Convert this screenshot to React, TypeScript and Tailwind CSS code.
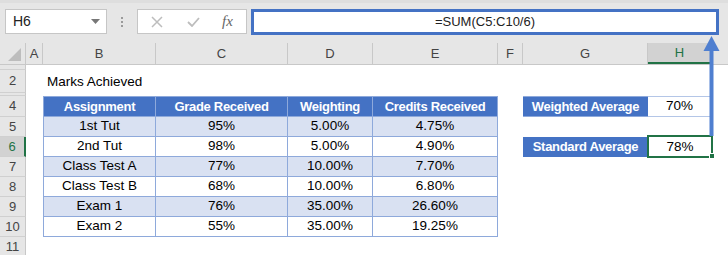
import React from 'react';

type DataRow = { n: number; name: string; grade: string; weight: string; credits: string };

const data: DataRow[] = [
  { n: 5, name: '1st Tut', grade: '95%', weight: '5.00%', credits: '4.75%' },
  { n: 6, name: '2nd Tut', grade: '98%', weight: '5.00%', credits: '4.90%' },
  { n: 7, name: 'Class Test A', grade: '77%', weight: '10.00%', credits: '7.70%' },
  { n: 8, name: 'Class Test B', grade: '68%', weight: '10.00%', credits: '6.80%' },
  { n: 9, name: 'Exam 1', grade: '76%', weight: '35.00%', credits: '26.60%' },
  { n: 10, name: 'Exam 2', grade: '55%', weight: '35.00%', credits: '19.25%' },
];

// row number cell on the left edge
const RowHead = ({ label, active, className = '' }: { label: string; active?: boolean; className?: string }) => (
  <div
    className={`w-[26px] shrink-0 flex items-center justify-center border-b border-[#d0d0d0] text-[13px] ${
      active ? 'bg-[#d2d2d2] text-[#217346] border-r-2 border-r-[#217346]' : 'bg-[#e6e6e6] text-[#444] border-r border-r-[#c8c8c8]'
    } ${className}`}
  >
    {label}
  </div>
);

const ColHead = ({ label, className = '', active }: { label: string; className?: string; active?: boolean }) => (
  <div
    className={`shrink-0 flex items-center justify-center pt-[1px] text-[13px] border-r border-[#c8c8c8] ${
      active ? 'bg-[#d2d2d2] text-[#217346] border-b-2 border-b-[#217346]' : 'text-[#444]'
    } ${className}`}
  >
    {label}
  </div>
);

const Toolbar = () => (
  <div className="h-[43px] bg-[#e6e6e6] border-t-[3px] border-[#dedede] flex items-start pt-[6px]">
    <div className="ml-[5px] w-[102px] h-[25px] bg-white border border-[#c6c6c6] flex items-center justify-between pl-[7px] pr-[6px] text-[14px] text-[#222]">
      <span>H6</span>
      <svg width="9" height="5" viewBox="0 0 9 5">
        <path d="M0 0 L9 0 L4.5 5 Z" fill="#777" />
      </svg>
    </div>
    <div className="w-[30px] h-[25px] flex flex-col items-center justify-center gap-[2px]">
      <span className="w-[2px] h-[2px] bg-[#9a9a9a]" />
      <span className="w-[2px] h-[2px] bg-[#9a9a9a]" />
      <span className="w-[2px] h-[2px] bg-[#9a9a9a]" />
    </div>
    <div className="w-[110px] h-[25px] bg-white border border-[#c6c6c6] flex items-center">
      <svg className="ml-[13px]" width="12" height="12" viewBox="0 0 12 12">
        <path d="M1 1 L11 11 M11 1 L1 11" stroke="#bdbdbd" strokeWidth="1.5" />
      </svg>
      <svg className="ml-[24px]" width="13" height="10" viewBox="0 0 13 10">
        <path d="M1 5 L5 9 L12 1" stroke="#bdbdbd" strokeWidth="1.8" fill="none" />
      </svg>
      <span className="ml-[22px] font-['Liberation_Serif',serif] italic text-[15px] text-[#666] leading-none">fx</span>
    </div>
    <div className="ml-[4px] w-[468px] h-[26px] bg-white border-[3px] border-[#4472C4] flex items-center justify-center text-[13px] text-[#222]">
      =SUM(C5:C10/6)
    </div>
  </div>
);

const HeaderRow = () => (
  <div className="flex h-[22px] bg-[#e6e6e6] border-b border-[#c8c8c8]">
    <div className="w-[26px] shrink-0 border-r border-[#c8c8c8] flex items-end justify-end pr-[4px] pb-[3px]">
      <svg width="13" height="13" viewBox="0 0 13 13">
        <path d="M13 0 L13 13 L0 13 Z" fill="#bdbdbd" />
      </svg>
    </div>
    <ColHead label="A" className="w-[17px]" />
    <ColHead label="B" className="w-[113px]" />
    <ColHead label="C" className="w-[132px]" />
    <ColHead label="D" className="w-[85px]" />
    <ColHead label="E" className="w-[125px]" />
    <ColHead label="F" className="w-[25px]" />
    <ColHead label="G" className="w-[125px]" />
    <ColHead label="H" className="w-[64px]" active />
    <div className="flex-1" />
  </div>
);

const tcell = 'shrink-0 flex items-center justify-center border-r border-b border-[#8EA9DB]';
const bold = 'font-bold text-[13px] tracking-[-0.3px] text-white';

export default function App() {
  return (
    <div className="relative w-[728px] h-[255px] overflow-hidden bg-white font-['Liberation_Sans',Arial,sans-serif] text-[13.5px] text-black">
      <Toolbar />
      <HeaderRow />

      {/* row 1, hidden */}
      <div className="flex h-[5px]">
        <RowHead label="" />
      </div>
      {/* row 2 */}
      <div className="flex h-[23px]">
        <RowHead label="2" />
        <div className="w-[17px] shrink-0" />
        <div className="pl-[4px] pt-[2px] flex items-center">Marks Achieved</div>
      </div>
      {/* row 3, hidden */}
      <div className="flex h-[3px]">
        <RowHead label="" />
      </div>

      {/* row 4: table header */}
      <div className="flex h-[21px]">
        <RowHead label="4" />
        <div className="w-[17px] shrink-0" />
        <div className={`${tcell} w-[113px] border-l border-t bg-[#4472C4] ${bold}`}>Assignment</div>
        <div className={`${tcell} w-[132px] border-t bg-[#4472C4] ${bold}`}>Grade Received</div>
        <div className={`${tcell} w-[85px] border-t bg-[#4472C4] ${bold}`}>Weighting</div>
        <div className={`${tcell} w-[125px] border-t bg-[#4472C4] ${bold}`}>Credits Received</div>
        <div className="w-[25px] shrink-0" />
        <div className={`w-[125px] shrink-0 flex items-center justify-center bg-[#4472C4] border-y border-[#8EA9DB] ${bold}`}>
          Weighted Average
        </div>
        <div className="w-[64px] shrink-0 flex items-center justify-center border-y border-r border-[#b4c6e7]">70%</div>
      </div>

      {data.map((r, i) => (
        <div key={r.n} className="flex h-[20px]">
          <RowHead label={String(r.n)} active={r.n === 6} />
          <div className="w-[17px] shrink-0" />
          <div className={`${tcell} w-[113px] border-l ${i % 2 === 0 ? 'bg-[#D9E1F2]' : 'bg-white'}`}>{r.name}</div>
          <div className={`${tcell} w-[132px] ${i % 2 === 0 ? 'bg-[#D9E1F2]' : 'bg-white'}`}>{r.grade}</div>
          <div className={`${tcell} w-[85px] ${i % 2 === 0 ? 'bg-[#D9E1F2]' : 'bg-white'}`}>{r.weight}</div>
          <div className={`${tcell} w-[125px] ${i % 2 === 0 ? 'bg-[#D9E1F2]' : 'bg-white'}`}>{r.credits}</div>
          <div className="w-[25px] shrink-0" />
          {r.n === 6 && (
            <>
              <div className={`w-[125px] shrink-0 flex items-center justify-center bg-[#4472C4] ${bold}`}>Standard Average</div>
              <div className="w-[64px] shrink-0 flex items-center justify-center">78%</div>
            </>
          )}
        </div>
      ))}

      <div className="flex h-[20px]">
        <RowHead label="11" />
      </div>

      {/* active cell selection on H6 */}
      <div className="absolute left-[647px] top-[135px] w-[66px] h-[23px] border-2 border-[#217346]" />
      <div className="absolute left-[709px] top-[153px] w-[6px] h-[6px] bg-[#217346] border border-white" />

      {/* arrow from H6 up to the formula bar */}
      <svg className="absolute left-[700px] top-[35px]" width="24" height="102" viewBox="0 0 24 102">
        <path d="M11.5 14 L11.5 101" stroke="#4F7FD0" strokeWidth="4" />
        <path d="M11.5 1 L19.5 16 L3.5 16 Z" fill="#4F7FD0" />
      </svg>
    </div>
  );
}
